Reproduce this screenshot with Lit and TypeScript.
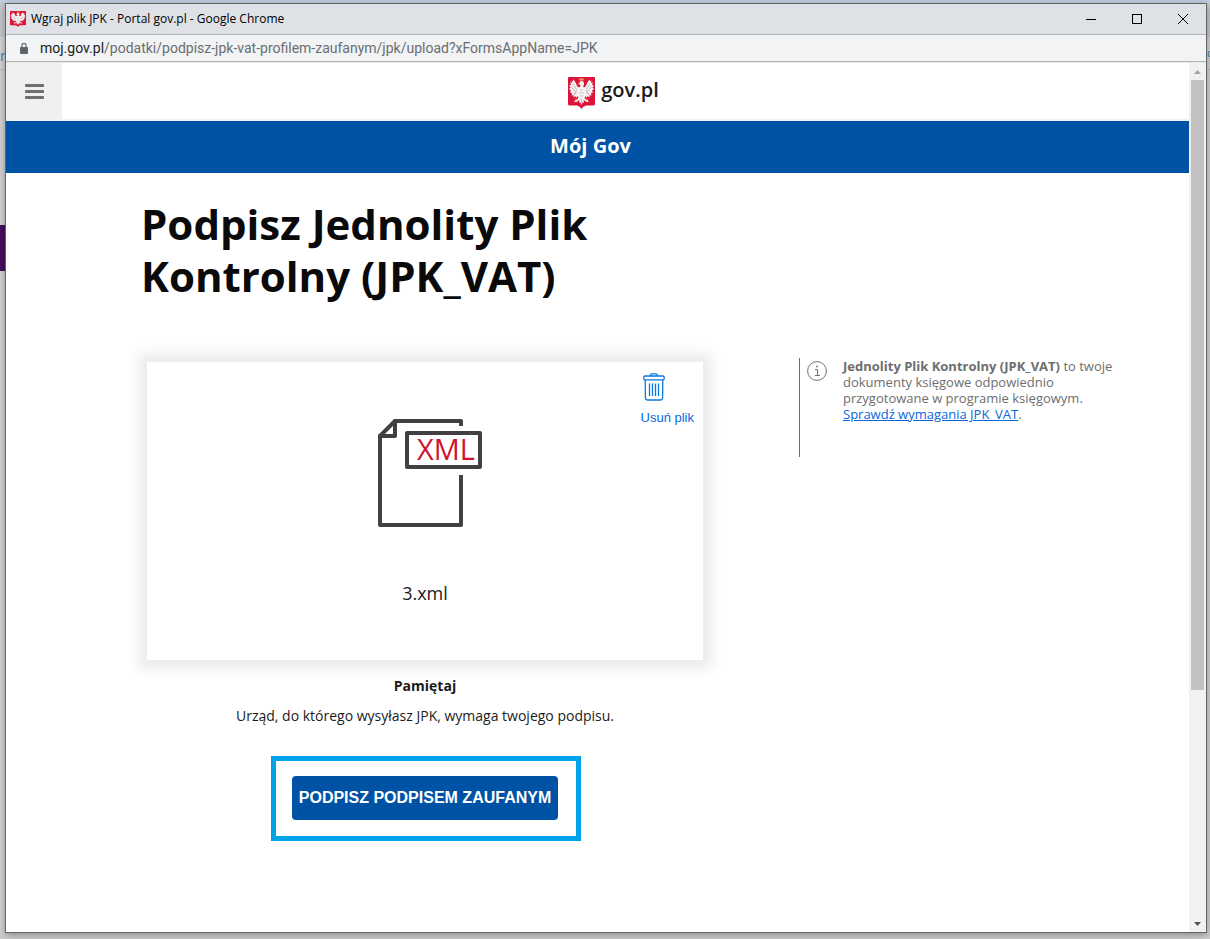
import { LitElement, html, css, svg } from "lit";
import { customElement } from "lit/decorators.js";

const emblem = svg`
  <path fill="#dc143c" d="M0 2Q0 0 2 0H52Q54 0 54 2V54Q54 57 50 57H36Q30 58 27 64Q24 58 18 57H4Q0 57 0 54Z"/>
  <g fill="#f6f1f2">
    <path d="M23 12Q23 8 27 8Q32 8 32 13Q32 17 30 20Q35 21 36 18Q39 8 44 5L44 9L47 7L46 12L50 11L48 16L52 17L49 21L52 24L48 27L50 31L46 32L47 37L43 36L43 41L39 38L38 42L35 38L33 42L37 46L41 45L39 48L43 50L37 50L33 47L31 46L32 51L29 51L27 56L25 51L22 51L23 46L21 47L17 50L11 50L15 48L13 45L17 46L21 42L19 38L16 42L15 38L11 41L11 36L7 37L8 32L4 31L6 27L2 24L5 21L2 17L6 16L4 11L8 12L7 7L10 9L10 5Q15 8 18 18Q19 21 24 20L25 16L20 14Z"/>
  </g>
  <path fill="none" stroke="#b9a9ae" stroke-width="1.5" d="M10 13L17 25L15 35M7 20L15 30L11 37M44 13L37 25L39 35M47 20L39 30L43 37M24 25Q27 28 30 25M23 31Q27 34 31 31M24 37Q27 40 30 37M27 43V52"/>
  <path fill="#e3b23c" d="M23 7L22 2L25 4L27 1L29 4L32 2L31 7ZM20 13L24 12V15ZM14 46L17 44L18 47ZM40 46L37 44L36 47Z"/>`;

@customElement("gov-emblem")
class GovEmblem extends LitElement {
  static styles = css`
    :host { display: block; }
    .shield { display: block; width: 100%; height: 100%; }
  `;
  render() {
    return html`<svg class="shield" viewBox="0 0 54 64" preserveAspectRatio="none" aria-hidden="true">${emblem}</svg>`;
  }
}

@customElement("app-root")
class AppRoot extends LitElement {
  static styles = css`
    :host {
      display: block;
      font-family: "Open Sans", "Noto Sans", sans-serif;
      color: #1b1b1b;
    }
    * { box-sizing: border-box; }
    button { border: 0; padding: 0; background: none; cursor: pointer; color: inherit; }
    svg { display: block; }

    .desktop {
      min-height: 100vh;
      display: grid;
      grid-template-columns: 5px minmax(0, 1fr) 3px;
      padding: 3px 0 6px;
      background: linear-gradient(#c3cfe1 0 3px, #d0d0d0 3px);
    }
    .behind {
      display: grid;
      grid-template-rows: 34px 32px 4px 152px 46px 1fr;
      overflow: hidden;
      font-size: 14px;
      line-height: 26px;
      background: linear-gradient(#c6c8cb 34px, #d3d5d7 34px 66px, #bcbcbc 66px 67px, #d4d4d4 67px);
    }
    .sliver { grid-row: 2; padding-top: 6px; color: #4a82ad; display: flex; justify-content: flex-end; }
    .purple { grid-row: 5; background: #470d5f; }
    .window {
      display: flex;
      flex-direction: column;
      border: 1px solid #646464;
      background: #fff;
      box-shadow: 0 2px 8px rgba(0, 0, 0, 0.35);
      position: relative;
    }

    .titlebar {
      display: flex;
      align-items: center;
      height: 31px;
      padding-left: 4px;
      background: #dee1e6;
      border-bottom: 1px solid #b2b2b4;
      color: #000;
    }
    .favicon { width: 16px; height: 16px; margin-right: 5px; }
    .title { flex: 1; font-size: 12px; line-height: 16px; }
    .control { width: 46px; height: 30px; display: grid; place-items: center; }
    .address {
      display: flex;
      align-items: center;
      height: 27px;
      padding-left: 14px;
      gap: 12px;
      background: #f1f3f4;
      border-bottom: 1px solid #b2b2b4;
    }
    .url { font-family: Roboto, sans-serif; font-size: 14px; line-height: 18px; color: #6b6e72; }
    .host { color: #202124; }

    .viewport { flex: 1; display: flex; border-top: 1px solid #e9e9e9; }
    .page { flex: 1; min-width: 0; }
    .scrollbar {
      width: 17px;
      padding: 0 2px;
      background: #f1f1f1;
      display: grid;
      grid-template-rows: 17px 611fr 225fr 17px;
    }
    .arrow { display: grid; place-items: center; }
    .thumb { background: #c1c1c1; }

    .header { display: flex; align-items: stretch; height: 58px; border-bottom: 2px solid #f1f1f1; }
    .menu { width: 56px; background: #f0f0f0; display: grid; place-items: center; }
    .brand {
      flex: 1;
      display: flex;
      justify-content: center;
      align-items: center;
      gap: 6px;
      padding-right: 24px;
      padding-top: 4px;
      text-decoration: none;
      color: #1b1b1b;
    }
    .logo { width: 27px; height: 32px; }
    .brandname { font-size: 20px; line-height: 28px; font-weight: 600; padding-bottom: 6px; }
    .band {
      height: 52px;
      padding: 0 14px 2px 0;
      display: grid;
      place-items: center;
      background: #0052a5;
      color: #fff;
      font-size: 20px;
      line-height: 28px;
      font-weight: 700;
    }

    .content {
      display: grid;
      grid-template-columns: minmax(0, 572fr) minmax(0, 390fr);
      column-gap: 88px;
      padding: 25px 0 40px 133px;
    }
    .heading {
      margin: 0 0 52px;
      padding-left: 2px;
      font-size: 42px;
      line-height: 52px;
      font-weight: 700;
      color: #0a0a0a;
      grid-column: 1;
    }
    .upload { grid-column: 1; padding: 8px; display: flex; flex-direction: column; align-items: center; text-align: center; }
    .card {
      width: 100%;
      display: flex;
      flex-direction: column;
      height: 298px;
      background: #fff;
      box-shadow: 0 0 12px 9px #ececec;
    }
    .remove {
      align-self: flex-end;
      display: flex;
      flex-direction: column;
      align-items: center;
      gap: 8px;
      margin: 11px 9px 0 0;
      font: 13px/18px "Liberation Sans", Arial, sans-serif;
      color: #0a68dc;
    }
    .remove svg { margin-right: 27px; }
    .file { align-self: center; margin-top: -8px; }
    .filename { margin: 54px 0 0; font-size: 18px; line-height: 24px; }
    .note { margin: 16px 0 0; font-size: 14px; line-height: 20px; font-weight: 700; }
    .text { margin: 10px 0 0; font-size: 14px; line-height: 20px; }
    .highlight { margin: 30px 0 0 2px; border: 5px solid #00a2e8; padding: 15px 18px 16px 16px; }
    .sign {
      display: block;
      height: 44px;
      padding: 0 7px;
      border-radius: 4px;
      background: #0052a5;
      color: #fff;
      font: 700 16px/20px "Liberation Sans", Arial, sans-serif;
    }
    .info {
      grid-column: 2;
      align-self: start;
      display: flex;
      align-items: flex-start;
      gap: 16px;
      min-height: 99px;
      margin-top: 4px;
      padding-left: 7px;
      border-left: 1px solid #707070;
      color: #6e6e6e;
    }
    .info svg { flex: none; margin-top: 3px; }
    .hint { margin: 0; max-width: 280px; font-size: 13px; line-height: 16px; }
    .link { color: #0a68dc; }
  `;

  render() {
    return html`
      <div class="desktop">
        <div class="behind" aria-hidden="true"><span class="sliver">n</span><span class="purple"></span></div>
        <div class="window">
          <div class="titlebar">
            <gov-emblem class="favicon"></gov-emblem>
            <span class="title">Wgraj plik JPK - Portal gov.pl - Google Chrome</span>
            <button class="control" aria-label="Minimalizuj">
              <svg width="10" height="10" viewBox="0 0 10 10"><path d="M0 5.5H10" stroke="#000"/></svg>
            </button>
            <button class="control" aria-label="Maksymalizuj">
              <svg width="10" height="10" viewBox="0 0 10 10"><rect x=".5" y=".5" width="9" height="9" fill="none" stroke="#000"/></svg>
            </button>
            <button class="control" aria-label="Zamknij">
              <svg width="10" height="10" viewBox="0 0 10 10"><path d="M0 0L10 10M10 0L0 10" stroke="#000"/></svg>
            </button>
          </div>
          <div class="address">
            <svg width="8" height="11" viewBox="0 0 8 11" aria-hidden="true">
              <rect y="4" width="8" height="7" rx="1" fill="#5f6368"/>
              <path d="M1.8 4V2.6a2.2 2.2 0 0 1 4.4 0V4" fill="none" stroke="#5f6368" stroke-width="1.1"/>
            </svg>
            <span class="url"><span class="host">moj.gov.pl</span>/podatki/podpisz-jpk-vat-profilem-zaufanym/jpk/upload?xFormsAppName=JPK</span>
          </div>
          <div class="viewport">
            <div class="page">
              <header class="header">
                <button class="menu" aria-label="Menu">
                  <svg width="19" height="15" viewBox="0 0 19 15" fill="#707070">
                    <rect width="19" height="3" rx=".8"/><rect y="6" width="19" height="3" rx=".8"/><rect y="12" width="19" height="3" rx=".8"/>
                  </svg>
                </button>
                <a class="brand" href="#">
                  <gov-emblem class="logo"></gov-emblem>
                  <span class="brandname">gov.pl</span>
                </a>
              </header>
              <div class="band">Mój Gov</div>
              <main class="content">
                <h1 class="heading">Podpisz Jednolity Plik Kontrolny (JPK_VAT)</h1>
                <section class="upload">
                  <div class="card">
                    <button class="remove">
                      <svg width="22" height="28" viewBox="0 0 22 28" fill="none" stroke="#0a78e0" stroke-width="1.3">
                        <path d="M7.5 3V2Q7.5 .8 8.7 .8H13Q14.3 .8 14.3 2V3"/>
                        <rect x=".8" y="3" width="20.4" height="3.8" rx="1.2"/>
                        <path d="M2.2 7L2.4 24.8Q2.5 27 4.7 27H17.3Q19.5 27 19.6 24.8L19.8 7M6.5 10.5V23M9.5 10.5V23M12.5 10.5V23M15.5 10.5V23"/>
                      </svg>
                      Usuń plik
                    </button>
                    <svg class="file" width="116" height="108" viewBox="0 0 116 108" aria-hidden="true">
                      <g fill="none" stroke="#414042" stroke-width="4" stroke-linejoin="round" stroke-linecap="round">
                        <path stroke-linecap="butt" d="M94 7V2H28L13 17V106H94V56"/>
                        <path d="M28 2V17H13"/>
                        <rect x="40" y="14" width="73" height="34"/>
                      </g>
                      <text x="50" y="41" font-family="Open Sans, sans-serif" font-size="29" fill="#d0142f">XML</text>
                    </svg>
                    <p class="filename">3.xml</p>
                  </div>
                  <p class="note">Pamiętaj</p>
                  <p class="text">Urząd, do którego wysyłasz JPK, wymaga twojego podpisu.</p>
                  <div class="highlight">
                    <button class="sign">PODPISZ PODPISEM ZAUFANYM</button>
                  </div>
                </section>
                <aside class="info">
                  <svg width="20" height="20" viewBox="0 0 20 20" fill="none" stroke="#707070" aria-hidden="true">
                    <circle cx="10" cy="10" r="9.4"/>
                    <path d="M8 8.5H10.5V14.5M8 14.5H13"/>
                    <circle cx="10" cy="5.5" r=".9" fill="#707070" stroke="none"/>
                  </svg>
                  <p class="hint"><b>Jednolity Plik Kontrolny (JPK_VAT)</b> to twoje dokumenty księgowe odpowiednio przygotowane w programie księgowym. <a class="link" href="#">Sprawdź wymagania JPK_VAT</a>.</p>
                </aside>
              </main>
            </div>
            <div class="scrollbar" aria-hidden="true">
              <span class="arrow"><svg width="7" height="4" viewBox="0 0 7 4"><path d="M0 4L3.5 0L7 4Z" fill="#a3a3a3"/></svg></span>
              <span class="thumb"></span>
              <span></span>
              <span class="arrow"><svg width="7" height="4" viewBox="0 0 7 4"><path d="M0 0H7L3.5 4Z" fill="#505050"/></svg></span>
            </div>
          </div>
        </div>
        <div class="behind" aria-hidden="true"><span class="sliver">%</span></div>
      </div>
    `;
  }
}
